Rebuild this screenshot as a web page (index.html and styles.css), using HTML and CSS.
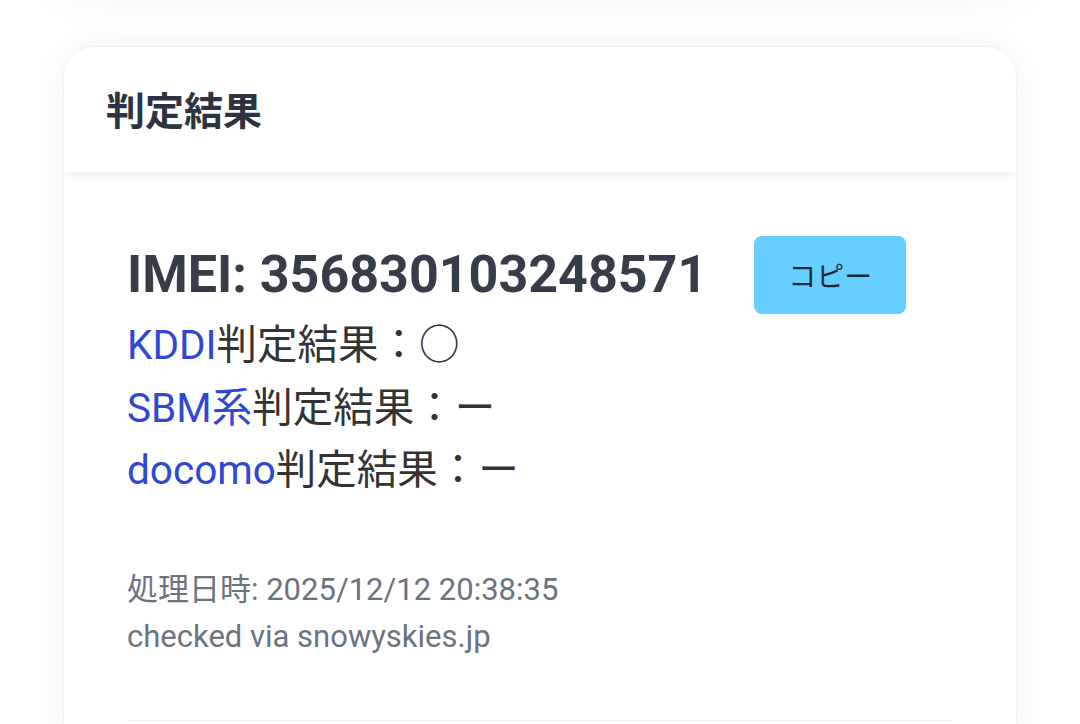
FILE: index.html
```html
<!DOCTYPE html>
<html lang="ja">
<head>
<meta charset="utf-8">
<link rel="stylesheet" href="styles.css">
</head>
<body>
<div class="page">
  <div class="prev-card"></div>
  <section class="card">
    <header class="card-header">
      <h2 class="card-title">判定結果</h2>
    </header>
    <div class="card-body">
      <div class="imei-row">
        <div class="imei">IMEI: 356830103248571</div>
        <button class="copy-btn">コピー</button>
      </div>
      <div class="results">
        <div class="result"><span class="carrier">KDDI</span>判定結果：○</div>
        <div class="result"><span class="carrier">SBM系</span>判定結果：ー</div>
        <div class="result"><span class="carrier">docomo</span>判定結果：ー</div>
      </div>
      <div class="meta">
        <div>処理日時: 2025/12/12 20:38:35</div>
        <div>checked via snowyskies.jp</div>
      </div>
      <div class="next-block"></div>
    </div>
  </section>
</div>
</body>
</html>
```
FILE: styles.css
```css
html, body {
  margin: 0;
  padding: 0;
  background: #ffffff;
  overflow: hidden;
}
body {
  font-family: "Roboto", "Noto Sans CJK JP", sans-serif;
  color: #333333;
}
.page {
  padding: 0 63px;
}
.prev-card {
  height: 100px;
  margin-top: -125px;
  margin-bottom: 71px;
  border-radius: 30px;
  background: #ffffff;
  box-shadow: 0 0 60px rgba(0, 0, 0, 0.14);
}
.card {
  background: #ffffff;
  border-radius: 30px;
  border: 1px solid #f1f1f1;
  box-shadow: 0 0 30px rgba(0, 0, 0, 0.06);
  overflow: hidden;
}
.card-header {
  height: 125px;
  display: flex;
  align-items: center;
  padding-left: 42px;
  box-shadow: 0 4px 8px rgba(0, 0, 0, 0.07);
  position: relative;
}
.card-title {
  margin: 0;
  font-family: "Noto Sans CJK JP", sans-serif;
  font-weight: 700;
  font-size: 39px;
  color: #2d3340;
  line-height: 1;
  padding-bottom: 3px;
}
.card-body {
  padding: 64px 64px 0 63px;
}
.imei-row {
  display: flex;
  align-items: center;
  gap: 47px;
}
.imei {
  font-weight: 700;
  font-size: 52px;
  color: #363c48;
  line-height: 1;
}
.copy-btn {
  height: 78px;
  padding: 0 34px;
  background: #66cfff;
  border: none;
  border-radius: 8px;
  font-family: "Noto Sans CJK JP", sans-serif;
  font-size: 28px;
  color: #1f2a37;
}
.results {
  font-size: 40.5px;
  line-height: 62.5px;
  color: #333333;
}
.carrier {
  color: #2f48d4;
}
.meta {
  margin-top: 64px;
  font-size: 31px;
  line-height: 47px;
  color: #6b7280;
}
.next-block {
  margin-top: 60px;
  height: 40px;
  border-top: 1px solid #eef1f3;
  background: #fdfdfe;
}
```
